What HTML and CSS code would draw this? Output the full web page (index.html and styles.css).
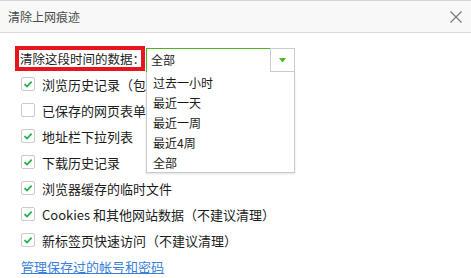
FILE: index.html
```html
<!DOCTYPE html>
<html lang="zh-CN">
<head>
    <meta charset="UTF-8">
    <title>清除上网痕迹</title>
    <link rel="stylesheet" href="styles.css">
</head>
<body>

<div class="dialog">
    <div class="dialog-head">
        <span class="dialog-title">清除上网痕迹</span>
        <span class="dialog-close">
            <svg width="12" height="12" viewBox="0 0 12 12"><path d="M0.5 0.5 L11.5 11.5 M11.5 0.5 L0.5 11.5" stroke="#7a7a7a" stroke-width="1.2" fill="none"/></svg>
        </span>
    </div>

    <div class="dialog-body">
        <div class="range">
            <span class="range-label">清除这段时间的数据：</span>
            <div class="select">
                <div class="select-value">全部</div>
                <div class="select-btn">
                    <svg width="7" height="5" viewBox="0 0 7 5"><path d="M0 0 H7 L3.5 4.5 Z" fill="#4cbb17"/></svg>
                </div>
                <ul class="select-menu">
                    <li>过去一小时</li>
                    <li>最近一天</li>
                    <li>最近一周</li>
                    <li>最近4周</li>
                    <li>全部</li>
                </ul>
            </div>
        </div>

        <ul class="items">
            <li class="item"><span class="box checked"></span>浏览历史记录（包含</li>
            <li class="item"><span class="box"></span>已保存的网页表单数</li>
            <li class="item"><span class="box checked"></span>地址栏下拉列表</li>
            <li class="item"><span class="box checked"></span>下载历史记录</li>
            <li class="item"><span class="box checked"></span>浏览器缓存的临时文件</li>
            <li class="item"><span class="box checked"></span>Cookies 和其他网站数据（不建议清理）</li>
            <li class="item"><span class="box checked"></span>新标签页快速访问（不建议清理）</li>
        </ul>

        <a class="manage" href="javascript:;">管理保存过的帐号和密码</a>
    </div>
</div>

</body>
</html>
```

FILE: styles.css
```css
body {
    margin: 0;
    background: #fff;
    font-family: "Noto Sans CJK SC", "Noto Sans", sans-serif;
    color: #1c1c1c;
}

ul {
    list-style: none;
    margin: 0;
    padding: 0;
}

.dialog-head {
    display: flex;
    align-items: center;
    justify-content: space-between;
    height: 31px;
    padding: 0 9px 0 8px;
    background: #f8f8f8;
    border-top: 1px solid #d6d6d0;
    border-bottom: 1px solid #d9d9d9;
}

.dialog-title {
    font-size: 12px;
    color: #4a4a4a;
}

.dialog-close {
    display: flex;
}

.dialog-body {
    padding: 13px 0 0 15px;
}

.range {
    display: flex;
    align-items: flex-start;
    height: 25px;
}

.range-label {
    box-sizing: border-box;
    width: 130px;
    height: 25px;
    padding: 0 0 0 1px;
    border: 4px solid #e8141e;
    font-size: 12.5px;
    line-height: 17px;
    white-space: nowrap;
    overflow: hidden;
}

.select {
    position: relative;
    display: flex;
    margin: 2px 0 0 1px;
    width: 149px;
    height: 25px;
    box-sizing: border-box;
}

.select-value {
    flex: 1;
    border: 1px solid #4cb81e;
    border-right: 0;
    padding-left: 4px;
    font-size: 12px;
    line-height: 22px;
}

.select-btn {
    display: flex;
    align-items: center;
    justify-content: center;
    width: 23px;
    border: 1px solid #c9cdd1;
    border-bottom-width: 2px;
}

.select-menu {
    position: absolute;
    top: 24px;
    left: 0;
    right: 0;
    padding: 1px 0 0;
    height: 101px;
    background: #fff;
    border: 1px solid #c6cbd0;
    border-top: 0;
    box-shadow: 0 1px 2px rgba(0, 0, 0, 0.12);
    box-sizing: border-box;
    font-size: 12px;
}

.select-menu li {
    height: 20px;
    line-height: 20px;
    padding-left: 6px;
}

.items {
    padding-left: 6px;
}

.item {
    display: flex;
    align-items: center;
    height: 26px;
    font-size: 13px;
    white-space: nowrap;
}

.box {
    box-sizing: border-box;
    width: 14px;
    height: 14px;
    margin-right: 7px;
    border: 1px solid #cbcbcb;
    border-radius: 2px;
    background: #fff;
}

.box.checked {
    background: #fff url("data:image/svg+xml,%3Csvg xmlns='http://www.w3.org/2000/svg' width='12' height='12' viewBox='0 0 12 12'%3E%3Cpath d='M2.5 6.2 L5 8.5 L9.6 3.6' stroke='%2324b04a' stroke-width='1.8' fill='none'/%3E%3C/svg%3E") center no-repeat;
}

.manage {
    display: inline-block;
    margin: 4px 0 0 6px;
    font-size: 13px;
    color: #3b7fd8;
    text-decoration: underline;
}
```
